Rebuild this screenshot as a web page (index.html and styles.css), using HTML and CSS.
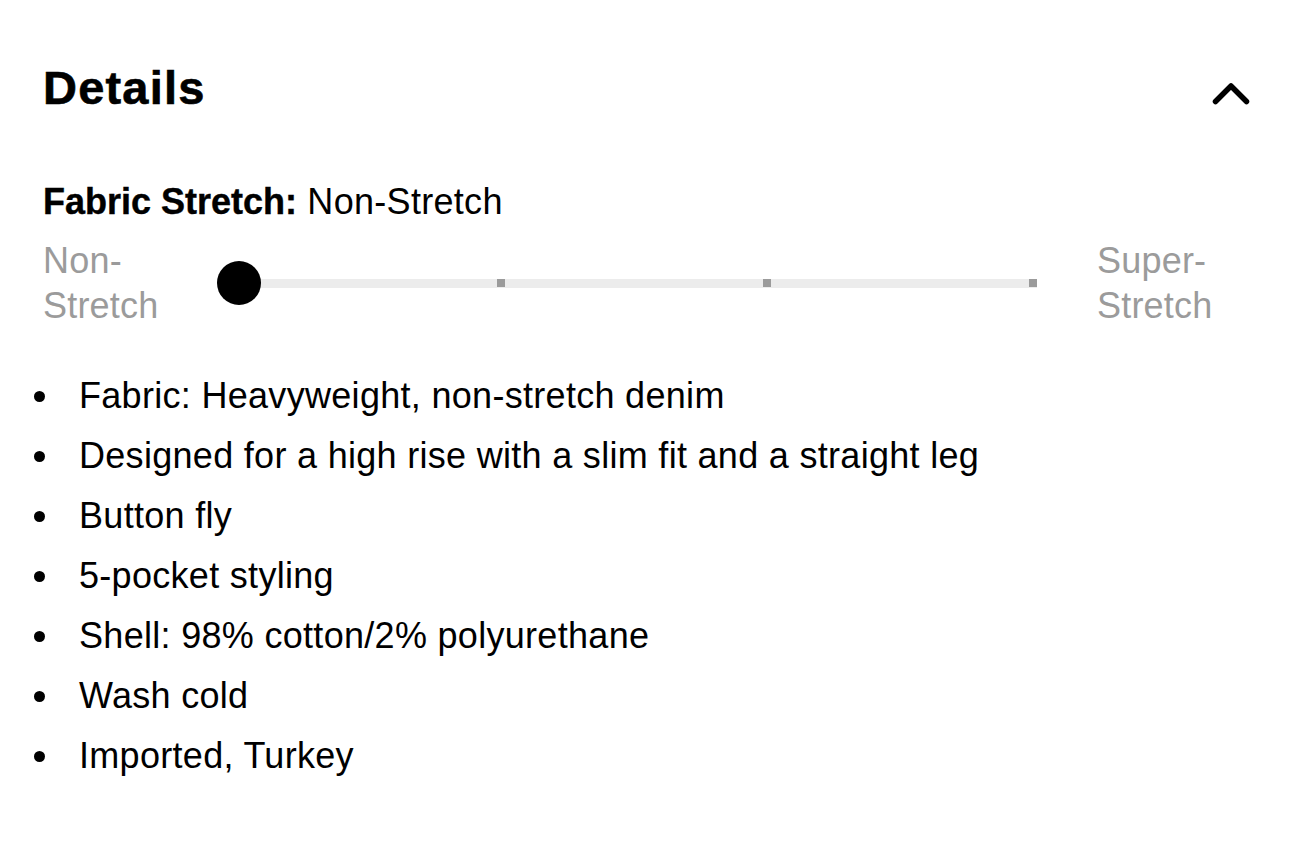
FILE: index.html
```html
<!DOCTYPE html>
<html lang="en">
<head>
<meta charset="utf-8">
<title>Details</title>
<link rel="stylesheet" href="styles.css">
</head>
<body>
<section class="details">
  <header class="details-header">
    <h2 class="details-title">Details</h2>
    <button class="toggle" aria-label="Collapse">
      <svg class="chevron" width="36" height="22" viewBox="0 0 36 22" aria-hidden="true">
        <polyline points="2.5,19.5 18,4 33.5,19.5" fill="none" stroke="#000" stroke-width="5.5" stroke-linecap="round" stroke-linejoin="round"/>
      </svg>
    </button>
  </header>

  <p class="stretch-line"><strong>Fabric Stretch:</strong> Non-Stretch</p>

  <div class="stretch-scale">
    <span class="scale-label">Non-<br>Stretch</span>
    <div class="slider">
      <div class="track">
        <span class="seg"><i class="tick"></i></span>
        <span class="seg"><i class="tick"></i></span>
        <span class="seg"><i class="tick"></i></span>
      </div>
      <span class="thumb"></span>
    </div>
    <span class="scale-label scale-label-right">Super-<br>Stretch</span>
  </div>

  <ul class="features">
    <li>Fabric: Heavyweight, non-stretch denim</li>
    <li>Designed for a high rise with a slim fit and a straight leg</li>
    <li>Button fly</li>
    <li>5-pocket styling</li>
    <li>Shell: 98% cotton/2% polyurethane</li>
    <li>Wash cold</li>
    <li>Imported, Turkey</li>
  </ul>
</section>
</body>
</html>
```

FILE: styles.css
```css
* {
  box-sizing: border-box;
}

html, body {
  margin: 0;
  padding: 0;
  background: #ffffff;
}

body {
  font-family: "Liberation Sans", Arial, sans-serif;
  color: #000;
}

.details {
  padding: 60px 41px 0 43px;
}

.details-header {
  display: flex;
  justify-content: space-between;
  align-items: flex-start;
  height: 56px;
}

.details-title {
  margin: 0;
  font-size: 47px;
  line-height: 56px;
  font-weight: 700;
  letter-spacing: 1.2px;
  -webkit-text-stroke: 0.6px #000;
}

.toggle {
  border: 0;
  background: none;
  padding: 0;
  margin-top: 22px;
  width: 36px;
  height: 22px;
  display: block;
  cursor: pointer;
}

.chevron {
  display: block;
  overflow: visible;
}

.stretch-line {
  margin: 64px 0 0;
  font-size: 36px;
  line-height: 44px;
  letter-spacing: 0.3px;
}

.stretch-line strong {
  font-weight: 700;
  letter-spacing: 0;
  -webkit-text-stroke: 0.4px #000;
}

.stretch-scale {
  display: grid;
  grid-template-columns: 174px 820px auto;
  align-items: center;
  margin-top: 14px;
}

.scale-label {
  font-size: 36px;
  line-height: 45px;
  color: #9b9b9b;
  letter-spacing: 0.2px;
}

.scale-label-right {
  margin-left: 60px;
}

.slider {
  position: relative;
  height: 44px;
  display: flex;
  align-items: center;
}

.track {
  margin-left: 22px;
  flex: 1;
  height: 9px;
  background: #ececec;
  display: grid;
  grid-template-columns: repeat(3, 1fr);
}

.seg {
  display: flex;
  justify-content: flex-end;
  align-items: center;
}

.tick {
  display: block;
  width: 8px;
  height: 8px;
  background: #9b9b9b;
}

.thumb {
  position: absolute;
  left: 0;
  top: 0;
  width: 44px;
  height: 44px;
  border-radius: 50%;
  background: #000;
}

.features {
  list-style: none;
  margin: 38px 0 0 -9px;
  padding: 0;
}

.features li {
  display: flex;
  align-items: center;
  font-size: 36px;
  line-height: 60px;
  height: 60px;
  white-space: nowrap;
  letter-spacing: 0.3px;
}

.features li::before {
  content: "";
  flex: 0 0 11px;
  width: 11px;
  height: 11px;
  border-radius: 50%;
  background: #000;
  margin-right: 34px;
}
```
